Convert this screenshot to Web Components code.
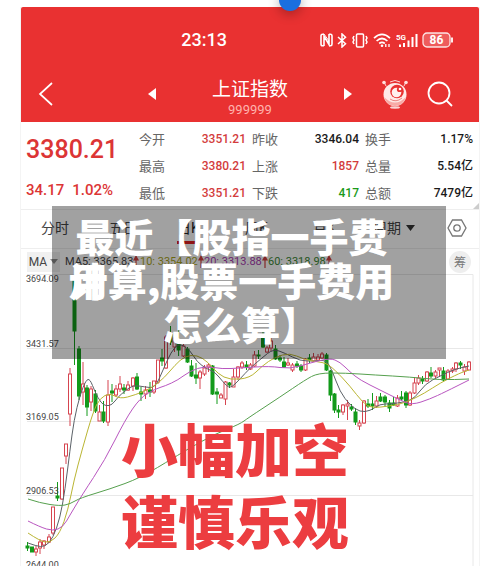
<!DOCTYPE html>
<html lang="zh-CN">
<head>
<meta charset="utf-8">
<title>上证指数</title>
<style>
body{margin:0;background:#fff;overflow:hidden;font-family:Roboto,"Noto Sans CJK SC",sans-serif}
</style>
</head>
<body>
<index-page></index-page>
<script>
function define(name, css, html, setup){
  customElements.define(name, class extends HTMLElement{
    connectedCallback(){
      if(this.shadowRoot) return;
      const root=this.attachShadow({mode:'open'});
      root.innerHTML='<style>*{box-sizing:border-box}button{font:inherit;color:inherit;background:none;border:0;padding:0;margin:0;display:inline-flex;align-items:center;justify-content:center}svg{display:block}'+css+'</style>'+html;
      if(setup) setup(root,this);
    }
  });
}

define('status-bar',`
:host{display:flex;align-items:center;justify-content:space-between;height:40px;padding:0 25px 0 35%;color:#fff}
time{font-size:18px;line-height:24px;font-weight:500}
div{display:flex;align-items:center;gap:4px}
`,`<time>23:13</time>
<div>
<svg width="13" height="14" viewBox="0 0 13 14" fill="none" stroke="#fff" stroke-width="1.6"><path d="M4 1.2H2.5Q1 1.2 1 3v8q0 1.8 1.500 1.800H4M9 1.200h1.500Q12 1.200 12 3v8q0 1.800-1.500 1.800H9M4 13V3l5 8.500V1"/><path d="M4 1l5 7" stroke-width="1"/></svg>
<svg width="10" height="15" viewBox="0 0 10 15" fill="none" stroke="#fff" stroke-width="1.500"><path d="M1 4l7.500 6.800L5 14V1l3.500 3.200L1 11"/></svg>
<svg width="18" height="15" viewBox="0 0 18 15" fill="none" stroke="#fff" stroke-width="1.500"><rect x="5.500" y="1" width="7" height="13" rx="1"/><path d="M3 3L2 5l1 2-1 2 1 2M15 3l1 2-1 2 1 2-1 2"/></svg>
<svg width="19" height="15" viewBox="0 0 19 15" fill="none" stroke="#fff" stroke-width="1.700"><path d="M1 5.200q8-7.500 16 0M3.600 8q5.400-5 10.800 0M6.200 10.500q2.800-2.400 5.600 0"/><circle cx="9" cy="12.800" r="1.300" fill="#fff" stroke="none"/><path d="M12.800 11v3M16 11v3" stroke-width="1.300"/></svg>
<svg width="22" height="15" viewBox="0 0 22 15"><text x="0" y="7" font-size="8" font-weight="700" fill="#fff">5G</text><path d="M3 11.500h2V14H3zM7 10h2v4H7zM11.500 7.500h2V14h-2zM15.500 4h2v10h-2zM19.500 1h2v13h-2z" fill="#fff"/></svg>
<svg width="32" height="16" viewBox="0 0 32 16"><rect x="1" y="1" width="27" height="14" rx="4" fill="#ee5c5c" stroke="#fff" stroke-opacity=".85" stroke-width="1.300"/><path d="M30 5.500v5" stroke="#fff" stroke-width="1.800"/><text x="14.500" y="12" text-anchor="middle" font-size="12" font-weight="700" fill="#fff">86</text></svg>
</div>`);

define('nav-bar',`
:host{display:grid;grid-template-columns:1fr auto 1fr;align-items:center;height:62px;padding:6px 26px 0;color:#fff}
.side{display:flex;justify-content:space-between;align-items:center}
.back{margin-left:-9px}
.tools{display:flex;gap:18px;align-items:center}
.mid{padding:8px 56px 0;text-align:center}
h1{margin:0;font-size:19px;line-height:24px;font-weight:400}
p{margin:0;font-size:13px;line-height:16px;color:#ffb3ae}
`,`<div class="side"><button class="back" aria-label="返回"><svg width="16" height="26" viewBox="0 0 16 26" fill="none" stroke="#fff" stroke-width="1.700"><path d="M14 2L2 13l12 11"/></svg></button><button aria-label="上一个"><svg width="8" height="12"><path d="M8 0v12L0 6z" fill="#fff"/></svg></button></div>
<div class="mid"><h1>上证指数</h1><p>999999</p></div>
<div class="side"><button aria-label="下一个"><svg width="8" height="12"><path d="M0 0v12l8-6z" fill="#fff"/></svg></button>
<span class="tools"><button aria-label="助手"><svg width="28" height="30" viewBox="0 0 28 30"><path d="M5 7L3 3M23 7l2-4M9 3q5-3 10 0" stroke="#fff" stroke-width="1" fill="none" opacity=".8"/><circle cx="3" cy="3.500" r="1.800" fill="#ffe0dd"/><circle cx="25" cy="3.500" r="1.800" fill="#ffe0dd"/><circle cx="14" cy="15.500" r="11.500" fill="#ffe9e7"/><path d="M3 18q11 11 22 0-3 9-11 9T3 18" fill="#f8aaa6"/><circle cx="16" cy="12.500" r="6.800" fill="#e93131"/><circle cx="15.500" cy="13.500" r="4.800" fill="#fff0ee"/><circle cx="18.500" cy="10.500" r="2.600" fill="#e93131"/><circle cx="19" cy="10" r="1.300" fill="#fff"/><path d="M9 20q6 4 12-1" stroke="#e98480" fill="none"/><ellipse cx="14" cy="28.500" rx="5" ry="1.200" fill="#fff" opacity=".8"/></svg></button>
<button aria-label="搜索"><svg width="26" height="26" viewBox="0 0 26 26" fill="none" stroke="#fff" stroke-width="1.800"><circle cx="12" cy="12" r="10.500"/><path d="M19.500 19.500L25 25"/></svg></button></span></div>`);

define('app-header',`:host{display:block;background:#e93131;padding:13px 0 0;border-radius:2px 2px 0 0}`,`<status-bar></status-bar><nav-bar></nav-bar>`);

define('quote-item',`
:host{display:flex;justify-content:space-between;align-items:center;line-height:27px;font-size:13px}
span{color:#666}
b{font-size:12px;font-weight:500;color:var(--value,#1a1a1a)}
:host([tone=up]) b{color:#d33c3c}
:host([tone=down]) b{color:#1a9a1a}
`,`<span><slot name="label"></slot></span><b><slot></slot></b>`);

define('quote-panel',`
:host{display:grid;grid-template-columns:118px 1fr;height:88px;padding:4px 6px 3px 0;border-bottom:1px solid #eee;position:relative}
.price{padding:4px 0 0 5px;color:#dc3535}
strong{display:block;font-size:25px;line-height:40px;font-weight:500}
p{margin:0;display:flex;gap:8px;font-size:15px;line-height:40px;font-weight:500}
.grid{display:grid;grid-template-columns:107px 107px 1fr;column-gap:6px;align-content:start}
i{position:absolute;right:0;bottom:0;border:solid transparent;border-width:0 0 6px 6px;border-bottom-color:#ccc}
`,`<div class="price"><strong>3380.21</strong><p><span>34.17</span><span>1.02%</span></p></div><div class="grid"></div><i></i>`,root=>{
  root.querySelector('.grid').innerHTML=[
    ['今开','3351.21','up'],['昨收','3346.04',''],['换手','1.17%',''],
    ['最高','3380.21','up'],['上涨','1857','up'],['总量','5.54亿',''],
    ['最低','3351.21','up'],['下跌','417','down'],['总额','7479亿','']
  ].map(([l,v,t])=>`<quote-item tone="${t}"><span slot="label">${l}</span>${v}</quote-item>`).join('');
});

define('period-tabs',`
:host{display:flex;align-items:center;justify-content:space-between;height:39px;padding:0 12px 0 20px;border-bottom:1px solid #eee;font-size:14px;color:#444}
nav{display:grid;grid-template-columns:repeat(4,68px) 60px auto}
button{justify-self:start;height:30px;line-height:28px;gap:5px;border-bottom:3px solid transparent}
[aria-current]{color:#222;border-color:#e02020}
`,`<nav><button>分时</button><button>五日</button><button aria-current="true">日K</button><button>周K</button><button>月K</button><button>周期<svg width="9" height="6"><path d="M0 0h9L4.500 6z" fill="#333"/></svg></button></nav>
<button aria-label="设置"><svg width="20" height="20" viewBox="0 0 20 20" fill="none" stroke="#777" stroke-width="1.300"><path d="M5.500 2h9L19 10l-4.500 8h-9L1 10z"/><circle cx="10" cy="10" r="3.200"/></svg></button>`);

define('ma-legend',`
:host{display:flex;align-items:center;height:25px;padding:0 8px 0 6px;font-size:12px;color:#444}
.pick{background:#f0f0f0;height:20px;width:33px;gap:3px;margin-right:5px}
ul{display:grid;grid-template-columns:75px 64px 64px auto;list-style:none;margin:0;padding:0;flex:1;white-space:nowrap;font-size:11px}
li{display:flex;align-items:center}
.chip{width:22px;height:22px;border-radius:50%;background:#eee;color:#777;font-size:12px}
`,`<button class="pick">MA<svg width="8" height="5"><path d="M0 0h8L4 5z" fill="#888"/></svg></button><ul></ul><button class="chip">筹</button>`,root=>{
  root.querySelector('ul').innerHTML=[['MA5: 3365.83','#444'],['10: 3354.02','#aaa51c'],['20: 3313.88','#a83ab0'],['60: 3318.98','#3d8a35']]
  .map(([t,c])=>`<li style="color:${c}">${t}<svg width="6" height="14" viewBox="0 0 6 14"><path d="M3 13V4" stroke="#d04040" stroke-width="1.200"/><path d="M0 5.500L3 0l3 5.500z" fill="#d04040"/></svg></li>`).join('');
});

// Candle rows: x, direction, body top, body bottom, high, low.
const candles=`27.5 g 546 548 542 551;32 g 547 552 547 552;36 r 549 552 546 556;40 r 542 548 539 554;44 r 541 545 540 549;49 r 537 542 534 543;53 r 507 533 507 535;57.5 g 496 498 482 501;62 r 468 499 468 500;66 r 444 456 444 464;70 r 374 414 368 426;74.5 g 280 331 278 365;79 g 349 396 346 400;83 r 384 392 362 405;87 g 388 407 385 416;91 r 389 402 386 411;95.5 g 394 411 390 413;99.5 r 412 421 405 421;103.5 g 412 421 401 423;108 r 395 422 380 426;112 g 391 393 384 402;116 r 389 395 385 397;120 r 384 389 376 392;124 g 388 390 384 394;128 r 385 390 381 391;133 r 378 386 377 391;137 g 377 389 373 390;141 g 392 394 387 401;145.5 r 390 394 386 399;150 g 390 392 382 397;154 r 381 392 381 394;158 r 360 382 360 384;162 g 358 361 349 366;166 r 337 368 335 369;170.5 g 334 342 326 345;174.5 r 338 347 333 352;178.6 g 340 350 329 356;183.5 r 346 356 343 357;187.5 g 349 362 347 363;191.5 g 366 376 360 377;196 g 375 378 363 384;200 r 372 378 370 389;204.5 r 368 374 365 376;208.5 r 365 367 363 372;212.500 g 366 394 365 395;217 g 392 394 388 404;221 r 395 398 393 398;225.500 r 382 399 381 405;229.500 g 383 385 382 388;233.500 r 377 387 369 387;238 r 367 377 366 380;242 r 363 367 361 369;246.500 g 365 367 361 370;250.500 r 365 369 363 370;254.500 r 355 366 351 367;258.500 g 355 356 350 359;263 g 335 347 330 348;267 r 348 352 346 353;271 r 341 348 338 351;275.500 g 349 359 345 360;280 g 358 360 355 362;284 g 362 367 357 368;288 r 363 365 358 366;292.500 r 365 370 363 372;297 g 364 366 361 368;301 g 366 370 364 372;305.500 r 359 370 358 371;309.500 g 358 360 354 363;313.500 r 357 361 353 362;318 r 357 360 354 361;322 r 354 358 352 359;326.500 g 355 370 353 371;330.500 g 371 395 370 401;334.500 g 394 410 393 413;338.500 g 410 412 405 418;343 r 405 412 404 415;347.500 r 404 406 400 420;351.500 g 407 409 404 411;355.500 g 412 422 408 425;359.500 r 423 426 420 430;364 r 401 423 400 424;368 g 404 406 399 408;372.500 g 404 406 393 410;376.500 r 401 406 396 408;380.500 g 397 401 393 402;385 g 397 402 395 407;389.500 g 403 408 400 412;393.500 g 403 405 397 406;397.500 r 398 406 395 407;401.500 g 397 399 391 400;406 g 393 405 391 408;410 r 393 405 391 406;414.500 r 383 393 377 394;418.500 r 378 383 375 385;422.500 g 379 381 376 384;427 r 372 381 371 382;431 g 373 376 367 378;435.500 r 372 376 370 378;439.500 r 368 370 368 377;443.500 g 371 380 367 381;448 r 371 379 369 380;452.500 r 369 371 367 373;456 r 363 369 362 372;460.500 g 363 365 361 369;464.500 r 367 371 364 375;469 r 362 370 361 370`;
const averages=[
['#5c6268','28,543 36,546 45,547 53,538 60,518 65,490 70,450 74,420 80,395 86,380 90,379 95,392 101,403 106,406 112,405 118,397 125,391 133,385 145,387 155,388 163,370 171,352 179,343 190,350 197,362 207,369 215,372 223,382 230,389 240,379 250,368 262,358 273,349 285,353 300,361 315,361 326,360 332,370 340,392 350,405 360,412 370,411 380,404 390,404 405,402 415,398 425,384 440,376 455,369 469,366'],
['#bab533','28,533 40,541 50,543 60,533 68,510 74,480 82,450 93,412 100,398 110,393 120,399 135,395 152,388 165,377 175,365 185,356 197,355 208,362 218,374 230,380 250,378 262,366 275,357 290,353 303,359 318,362 326,363 335,370 350,386 363,403 372,408 390,406 405,403 425,393 440,383 460,373 469,370'],
['#b956c0','28,521 40,527 53,531 63,527 70,515 82,495 105,460 125,420 140,398 155,389 165,386 178,380 190,371 205,366 222,369 240,368 270,366 290,369 310,363 330,358 340,362 350,372 360,380 380,390 400,400 412,405 430,399 445,392 469,380'],
['#56a04e','28,499 40,503 60,506 70,504 80,498 110,489 140,478 175,457 188,449 215,434 240,424 248,418 280,397 305,380 318,373 345,373 375,375 410,377 440,380 469,379']];
function curve(points){
  const p=points.split(' ').map(s=>s.split(',').map(Number));
  let d='M'+p[0];
  for(let i=1;i<p.length-1;i++) d+=`Q${p[i]} ${(p[i][0]+p[i+1][0])/2},${(p[i][1]+p[i+1][1])/2}`;
  return d+'L'+p[p.length-1];
}
define('candle-chart',`:host{display:block}svg{width:100%;height:auto}`,``,root=>{
  let s='<svg viewBox="21 274 458 296" role="img" aria-label="日K走势">';
  s+='<path d="M27 274.500H473V570M27 348.500H473M27 421.500H473M27 495.500H473" fill="none" stroke="#e8e8e8"/>';
  for(const row of candles.split(';')){
    const [x,c,a,b,h,l]=row.split(' ').map((v,i)=>i===1?v:Number(v));
    const k=c==='g'?'#139a1b':'#d64550';
    s+=`<path d="M${x} ${h}V${a}M${x} ${b}V${l}" stroke="${k}"/>`;
    s+=`<rect x="${x-1.500}" y="${a}" width="3" height="${b-a}" fill="${c==='g'?k:'#fff'}" stroke="${k}"/>`;
  }
  for(const [c,p] of averages) s+=`<path d="${curve(p)}" fill="none" stroke="${c}"/>`;
  [['3694.09',282],['3431.57',347],['3169.05',420],['2906.53',494],['2644.00',568]].forEach(([t,y])=>s+=`<text x="26" y="${y}" font-size="9" fill="#444">${t}</text>`);
  s+='<g font-size="57" font-weight="900" fill="#ec3d40" text-anchor="middle"><text x="235" y="472">小幅加空</text><text x="235" y="544">谨慎乐观</text></g></svg>';
  root.innerHTML+=s;
});

define('caption-overlay',`
:host{display:block;position:absolute;top:206px;left:52px;right:54px;padding:7px 35px 14px 0;background:rgba(0,0,0,.37);color:#fff;text-align:center}
h2{margin:0;font:900 39px/44px "Noto Sans CJK SC",sans-serif;white-space:nowrap}
span{display:inline-block;position:relative}
em{position:absolute;left:0;top:0;font-style:normal}
.end{font-feature-settings:"halt"}
`,`<h2>最近【股指一手费<br><span>用<em>计</em></span>算,股票一手费用<br>怎么算<span class="end">】</span></h2>`);

define('page-dot',`:host{display:block;position:absolute;top:-11px;left:58%;width:22px;height:22px;margin-left:-11px;border-radius:50%;background:#1a6fe0;box-shadow:0 3px 12px rgba(0,0,0,.3)}`,``);

define('index-page',`
:host{display:block;position:relative;padding:7px 21px 0;overflow:hidden;height:100vh;box-sizing:border-box}
main{border:solid #f4f4f4;border-width:0 1px;margin:0 -1px}
`,`<main><app-header></app-header><quote-panel></quote-panel><period-tabs></period-tabs><ma-legend></ma-legend><candle-chart></candle-chart></main><page-dot></page-dot><caption-overlay></caption-overlay>`);
</script>
</body>
</html>
